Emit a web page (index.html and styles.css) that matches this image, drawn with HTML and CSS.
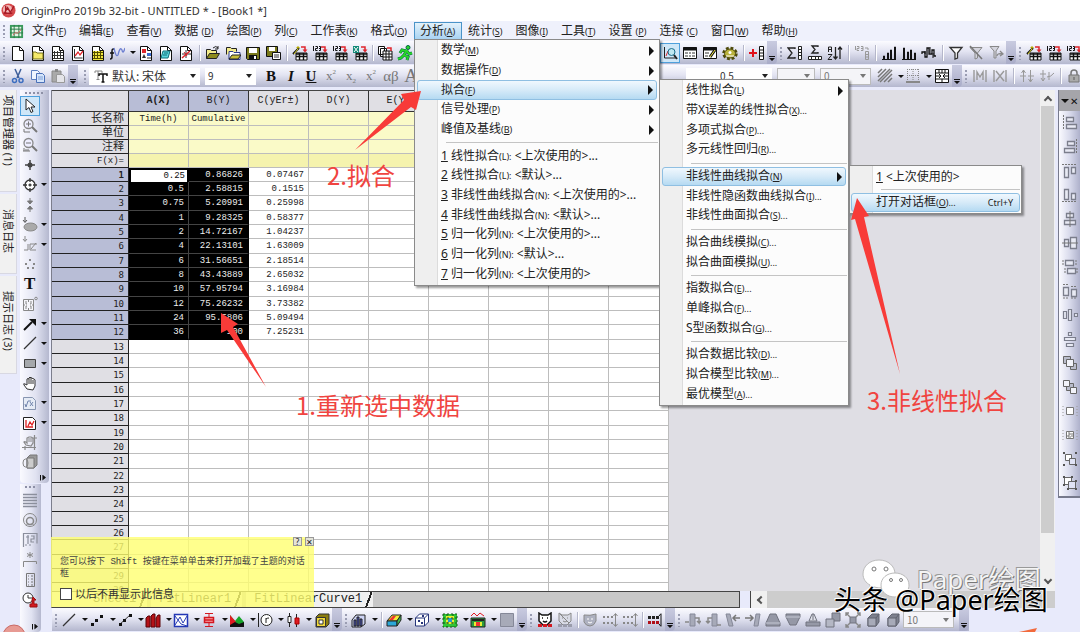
FILE: index.html
```html
<!DOCTYPE html>
<html lang="zh-CN">
<head>
<meta charset="utf-8">
<title>OriginPro 2019b 32-bit - UNTITLED * - [Book1 *]</title>
<link rel="stylesheet" href="styles.css">
</head>
<body>
<svg class="sprite" aria-hidden="true">
  <symbol id="page" viewBox="0 0 16 16"><path d="M2.500 1.500h7l4 4v10h-11z" fill="#fff" stroke="#111"/><path d="M9.500 1.500v4h4" fill="none" stroke="#111"/></symbol>
  <symbol id="pfolder" viewBox="0 0 16 16"><use href="#page"/><path d="M3 7h3l1 1h6v6H3z" fill="#f4e96a" stroke="#75701c"/></symbol>
  <symbol id="pgrid" viewBox="0 0 16 16"><use href="#page"/><path d="M4.500 6v8M7.500 6v8M10.500 6v8M3 7.500h10M3 10.500h10M3 13.500h10" stroke="#333"/></symbol>
  <symbol id="pgraph" viewBox="0 0 16 16"><use href="#page"/><path d="M4.500 4v9h8" fill="none" stroke="#333"/><path d="M5 11l3-4 2 3 3-4" fill="none" stroke="#e0262c" stroke-width="1.300"/></symbol>
  <symbol id="pmatrix" viewBox="0 0 16 16"><use href="#page"/><path d="M3 6h10v9H3z" fill="#f0e640"/><path d="M4.500 6v8M7.500 6v8M10.500 6v8M3 7.500h10M3 10.500h10M3 13.500h10" stroke="#554f00"/></symbol>
  <symbol id="func" viewBox="0 0 16 16"><path d="M5 4H4q-1 0-1 2v6q0 2-2 2M1 8h4" fill="none" stroke="#111" stroke-width="1.500"/><path d="M5 3q2 10 4 7q2-9 4-5q1 5 3-2" fill="none" stroke="#6d7fd0" stroke-width="1.300"/></symbol>
  <symbol id="playout" viewBox="0 0 16 16"><use href="#page"/><path d="M4 4h4v4H4z" fill="#e0262c"/><path d="M9 8h4v3H9z" fill="#3b6bd0"/><path d="M4 13l2-4 2 4z" fill="#333"/><path d="M9 13h4" stroke="#333"/></symbol>
  <symbol id="pnote" viewBox="0 0 16 16"><use href="#page"/><path d="M5 6h7l-2 7H3z" fill="#58d4dc" stroke="#137078"/><path d="M6 8h4M5 10h4" stroke="#137078"/></symbol>
  <symbol id="pexcel" viewBox="0 0 16 16"><use href="#page"/><path d="M8 5v8M4 9h9" stroke="#333"/><path d="M4 13l8-7" stroke="#e0262c" stroke-width="1.500"/><path d="M6 7l3 4" stroke="#e0262c"/></symbol>
  <symbol id="open" viewBox="0 0 16 16"><path d="M1.500 13.500v-9h4l1 1h5v3" fill="#f4ec8a" stroke="#222"/><path d="M1.500 13.500l3-5h10l-3 5z" fill="#8d8a1c" stroke="#222"/><path d="M8 3q3-3 5 0M13 1v3h-3" fill="none" stroke="#222"/></symbol>
  <symbol id="open2" viewBox="0 0 16 16"><path d="M1.500 9.500v-7h4l1 1h5v3" fill="#f4ec8a" stroke="#222"/><path d="M4 14.500v-8h4l1 1h6v7z" fill="#fff" stroke="#2b3a8c"/><path d="M4 14l3-4h9l-3 4z" fill="#c7bd3a" stroke="#222"/></symbol>
  <symbol id="save" viewBox="0 0 16 16"><path d="M1.500 2.500h13v12h-12l-1-1z" fill="#7b7a1b" stroke="#111"/><path d="M4 3h8v5H4z" fill="#fff"/><path d="M4 10h8v4H4z" fill="#111"/><path d="M9 11h2v3H9z" fill="#fff"/></symbol>
  <symbol id="save2" viewBox="0 0 16 16"><path d="M1.500 1.500h11v10h-11z" fill="#7b7a1b" stroke="#111"/><path d="M4 2h6v4H4z" fill="#fff"/><path d="M7.500 7.500h8v7h-8z" fill="#fff" stroke="#111"/><path d="M9 10h5M9 12h5" stroke="#333"/></symbol>
  <symbol id="sheet" viewBox="0 0 16 16"><path d="M4 8h11v7H4z" fill="#fff" stroke="#111"/><path d="M4 9h11M4 11.500h11M7.500 8v7M11.500 8v7" stroke="#111" stroke-width="1.400"/></symbol>
  <symbol id="redarrow" viewBox="0 0 16 16"><path d="M9 2h4v4" fill="none" stroke="#e0262c" stroke-width="1.500"/><path d="M10.500 4.500h5l-2.500 3z" fill="#e0262c"/></symbol>
  <symbol id="wizard" viewBox="0 0 16 16"><use href="#sheet"/><use href="#redarrow"/><path d="M1 9l6-6" stroke="#111" stroke-width="2"/><path d="M2 9l4-5" stroke="#e7dd30"/><path d="M6 1v3M4.500 2.500h3" stroke="#b5a900"/></symbol>
  <symbol id="ascii" viewBox="0 0 16 16"><use href="#sheet"/><use href="#redarrow"/><path d="M1.500 1v5M3.500 1.500h2v2h-2v2h2M7 1.500h1.500v4H7M7 3.500h1.500" fill="none" stroke="#111"/></symbol>
  <symbol id="xls" viewBox="0 0 16 16"><use href="#sheet"/><path d="M1 1h6v7H1z" fill="#138a78"/><path d="M2 2l4 5M6 2L2 7" stroke="#fff"/><use href="#redarrow"/></symbol>
  <symbol id="batch" viewBox="0 0 16 16"><path d="M1.500 1.500h6v8h-6zM3.500 3.500h6v8h-6z" fill="#fff" stroke="#111"/><path d="M6 6h9v9H6z" fill="#fff" stroke="#111"/><path d="M6 9h9M6 12h9M9 6v9M12 6v9" stroke="#111"/><path d="M10 3h4v3" fill="none" stroke="#e0262c" stroke-width="1.500"/></symbol>
  <symbol id="run" viewBox="0 0 16 16"><circle cx="11" cy="2.500" r="2" fill="#28d628" stroke="#064"/><path d="M10 5l-3 5 4 2-1 3M7 10l-3 3-3 1M9 6L5 5 3 8M10 6l2 3 3-1" fill="none" stroke="#064" stroke-width="3"/><path d="M10 5l-3 5 4 2-1 3M7 10l-3 3-3 1M9 6L5 5 3 8M10 6l2 3 3-1" fill="none" stroke="#28d628" stroke-width="2"/></symbol>
  <symbol id="zoomgraph" viewBox="0 0 16 16"><path d="M2.500 2v11h11M2 4h1M2 7h1M2 10h1" fill="none" stroke="#222"/><path d="M4 11l2-5 2 2" fill="none" stroke="#e0262c"/><circle cx="9.500" cy="7" r="3.500" fill="#bfe8f2" stroke="#1a6c8a"/><path d="M12 10l3 4" stroke="#222" stroke-width="2"/></symbol>
  <symbol id="results" viewBox="0 0 16 16"><path d="M1.500 2.500h13v11h-13z" fill="#fff" stroke="#111"/><path d="M1 4h14" stroke="#111" stroke-width="3"/><path d="M3 8h3M7 8h2M10 8h3M3 11h3M7 11h2M10 11h3" stroke="#333"/></symbol>
  <symbol id="script" viewBox="0 0 16 16"><path d="M1.500 2.500h13v11h-13z" fill="#fff" stroke="#111"/><path d="M1 4h14" stroke="#111" stroke-width="3"/><path d="M3 8h4M3 11h3" stroke="#333"/><path d="M8 12l5-7" stroke="#111" stroke-width="3"/><path d="M8 12l5-7" stroke="#f0e640"/></symbol>
  <symbol id="gear" viewBox="0 0 16 16"><ellipse cx="8" cy="8.500" rx="6" ry="5" fill="none" stroke="#4d4a0a" stroke-width="3.500" stroke-dasharray="2.600 1.700"/><ellipse cx="8" cy="8.500" rx="5.500" ry="4.500" fill="#b9b23c" stroke="#4d4a0a"/><circle cx="8" cy="7.500" r="1.500" fill="#fff"/><path d="M4 11h8" stroke="#fff"/></symbol>
  <symbol id="addcol" viewBox="0 0 16 16"><path d="M0 8h8M4 4v8" stroke="#e0101c" stroke-width="2"/><path d="M10.500 1.500h4v13h-4zM10 5h5M10 8h5M10 11h5" fill="#fff" stroke="#111"/></symbol>
  <symbol id="sumcol" viewBox="0 0 16 16"><path d="M8 4V3H1l4 5-4 5h7v-1" fill="none" stroke="#222" stroke-width="1.300"/><path d="M11.500 1.500h3v13h-3zM11 4.500h4M11 7.500h4M11 10.500h4" fill="#fff" stroke="#222"/></symbol>
  <symbol id="sumrow" viewBox="0 0 16 16"><path d="M11 2V1H5l3 3.500L5 8h6V7" fill="none" stroke="#222" stroke-width="1.300"/><path d="M1.500 11.500h13v3h-13zM4.500 11v4M8.500 11v4M11.500 11v4" fill="#fff" stroke="#222"/></symbol>
  <symbol id="sort" viewBox="0 0 16 16"><path d="M1.500 7V2h3v5M1 4.500h3M1 9.500h4l-4 5h4" fill="none" stroke="#222"/><path d="M8.500 2v12M6.500 11.500l2 2.500 2-2.500M13 14V2M11 4.500L13 2l2 2.500" fill="none" stroke="#222" stroke-width="1.300"/></symbol>
  <symbol id="setcol" viewBox="0 0 16 16"><path d="M1.500 1v4M3 1.500h2v2H3v2h2M7 1.500h2v4H7M7 3.500h2M11 3h3v2" fill="none" stroke="#999"/><path d="M11.500 6.500h3v8h-3zM11 9.500h4M11 12h4" fill="none" stroke="#999"/></symbol>
  <symbol id="hist" viewBox="0 0 16 16"><path d="M1 14.500h14M2.500 14v-3h1v3M6.500 14V8h1v6M9.500 14V5h1v9M13.500 14V2h1v12" fill="none" stroke="#111"/></symbol>
  <symbol id="hist2" viewBox="0 0 16 16"><path d="M1 14.500h14M2.500 14V3h1v11M6.500 14V7h1v7M9.500 14V5h1v9M13.500 14V8h1v6" fill="none" stroke="#111"/></symbol>
  <symbol id="hist3" viewBox="0 0 16 16"><path d="M1 9V7h3v5h2V3h2v6h3V5h2v6h2" fill="none" stroke="#111" stroke-width="1.300"/><path d="M4 6v3M9 2v6M12 8v5" stroke="#111"/></symbol>
  <symbol id="filter" viewBox="0 0 16 16"><path d="M2 2.500h12L9.500 8v5L7 14V8z" fill="#fff" stroke="#333" stroke-width="1.300"/></symbol>
  <symbol id="filterx" viewBox="0 0 16 16"><path d="M2 2.500h12L9.500 8v5L7 14V8z" fill="#d5d5de" stroke="#888"/><path d="M2 1l12 13" stroke="#777" stroke-width="1.500"/></symbol>
  <symbol id="filterr" viewBox="0 0 16 16"><path d="M2 1.500h9L8 6v7H6V6z" fill="#d5d5de" stroke="#888"/><path d="M9 11q0-3 5-2M12 6l3 3-3 2" fill="none" stroke="#888" stroke-width="1.300"/></symbol>
  <symbol id="cut" viewBox="0 0 16 16"><path d="M5 1l4 9M11 1L7 10" stroke="#3d5e9a" stroke-width="1.500"/><circle cx="4.500" cy="12.500" r="2" fill="none" stroke="#3d6ec0" stroke-width="1.500"/><circle cx="11" cy="12.500" r="2" fill="none" stroke="#3d6ec0" stroke-width="1.500"/></symbol>
  <symbol id="copy" viewBox="0 0 16 16"><path d="M1.500 2.500h6l2 2v7h-8z" fill="#eef5ff" stroke="#5b7fc0"/><path d="M6.500 5.500h6l2 2v7h-8z" fill="#d5e5fb" stroke="#4a70b8"/><path d="M8 9h5M8 11h5" stroke="#7fa0d8"/></symbol>
  <symbol id="paste" viewBox="0 0 16 16"><path d="M2 3h9v11H2z" fill="#aaa" stroke="#888"/><path d="M5 1h3v3H5z" fill="#888"/><path d="M6.500 6.500h6l2 2v6h-8z" fill="#e4e4e8" stroke="#999"/></symbol>
  <symbol id="tt" viewBox="0 0 16 16"><path d="M2 5V3h7v2M5 3v8M3.500 11.500h3" fill="none" stroke="#888"/><path d="M6 8V6h8v2M10 6v8M8.500 14h3" fill="none" stroke="#111" stroke-width="1.500"/></symbol>
  <symbol id="hatch" viewBox="0 0 16 16"><path d="M1 5l4-4M1 9l8-8M1 13L13 1M3 14L15 2M7 14l8-8M11 14l4-4" stroke="#777" stroke-width="1.500"/></symbol>
  <symbol id="border" viewBox="0 0 16 16"><path d="M2 1.500h12M2 7.500h12M2.500 1v12M8 1v12M13.500 1v12" stroke="#888" stroke-dasharray="1 1"/><path d="M1 14h14" stroke="#888" stroke-width="2"/></symbol>
  <symbol id="merge" viewBox="0 0 16 16"><path d="M1.500 1.500h13v13h-13zM1 5h14M1 11h14M8 1v4M8 11v4M5 1v4M11 1v4" fill="#fff" stroke="#111"/><path d="M2 8h4M14 8h-4M5 6l2 2-2 2M11 6L9 8l2 2" fill="none" stroke="#111"/></symbol>
  <symbol id="maskm" viewBox="0 0 16 16"><path d="M2 2v12M14 2v12M5 12V4l3 5 3-5v8" fill="none" stroke="#999" stroke-width="1.400"/></symbol>
  <symbol id="maskx" viewBox="0 0 16 16"><path d="M2 2v12M14 2v12M4 3l8 10M12 3L4 13" fill="none" stroke="#999" stroke-width="1.400"/></symbol>
  <symbol id="hash" viewBox="0 0 16 16"><path d="M1 8h6M9 8h6M4.500 2v12M11.500 2v12M2.500 5l2-3 2 3M9.500 11l2 3 2-3" fill="none" stroke="#999"/></symbol>
  <symbol id="hash2" viewBox="0 0 16 16"><path d="M1 6h6M4 2v11M2 10l2 3 2-3M8 9q4 0 7-4M10 4v8" fill="none" stroke="#999"/></symbol>
  <symbol id="lock" viewBox="0 0 16 16"><path d="M3 7h10v7H3z" fill="#aaa" stroke="#777"/><path d="M5 7V5q0-3 3-3t3 3v2M8 9v3" fill="none" stroke="#777" stroke-width="1.500"/></symbol>

  <symbol id="pointer" viewBox="0 0 16 16"><path d="M4 1v11l3-2.500 2 5 2-1-2-4.500h4z" fill="#fff" stroke="#222"/></symbol>
  <symbol id="zin" viewBox="0 0 16 16"><circle cx="6.500" cy="6" r="4.500" fill="#eef" stroke="#888" stroke-width="1.300"/><path d="M4 6h5M6.500 3.500v5M2 11v3h6" fill="none" stroke="#777"/><path d="M10 9l5 5" stroke="#777" stroke-width="2"/></symbol>
  <symbol id="zout" viewBox="0 0 16 16"><circle cx="6.500" cy="6" r="4.500" fill="#eef" stroke="#888" stroke-width="1.300"/><path d="M4 6h5M1 14h7M2 11v3M4 12v2M6 12v2" fill="none" stroke="#777"/><path d="M10 9l5 5" stroke="#777" stroke-width="2"/></symbol>
  <symbol id="reader" viewBox="0 0 16 16"><path d="M8 3v10M3 8h10" stroke="#444" stroke-width="1.500"/><circle cx="8" cy="8" r="2.500" fill="#444"/></symbol>
  <symbol id="target" viewBox="0 0 16 16"><circle cx="8" cy="8" r="5" fill="#fff" stroke="#333" stroke-width="1.300"/><path d="M8 1v4M8 11v4M1 8h4M11 8h4M6.500 8h3M8 6.500v3" stroke="#333" stroke-width="1.300"/></symbol>
  <symbol id="dsel" viewBox="0 0 16 16"><path d="M8 1v5M5.500 4L8 7l2.500-3zM8 15v-5M5.500 12L8 9l2.500 3z" fill="#777" stroke="#777"/></symbol>
  <symbol id="msk" viewBox="0 0 16 16"><path d="M3 0v5M1 3l2 2.500L5 3" fill="none" stroke="#555"/><ellipse cx="8.500" cy="10" rx="6.500" ry="4" fill="#aaa" stroke="#888"/></symbol>
  <symbol id="mskp" viewBox="0 0 16 16"><path d="M3 0v5M1 3l2 2.500L5 3M2 14h4V8M8 8h7M8 8v6h6M9 13l5-6" fill="none" stroke="#888"/></symbol>
  <symbol id="dots" viewBox="0 0 16 16"><path d="M7 3h2v2H7zM3 7h2v2H3zM11 7h2v2h-2zM5 11h2v2H5zM10 11h2v2h-2z" fill="#888"/></symbol>
  <symbol id="cam" viewBox="0 0 16 16"><path d="M1.500 3.500h10v11h-10z" fill="#f5f5fa" stroke="#888"/><path d="M4 5v3h1M9 5v3H8M4 13v-3h1M9 13v-3H8M6.500 4v2M6.500 12v2M2 9h1M10 9h1" fill="none" stroke="#888"/><circle cx="14" cy="2.500" r="1.300" fill="none" stroke="#888"/></symbol>
  <symbol id="arr" viewBox="0 0 16 16"><path d="M2 14l8-8" stroke="#111" stroke-width="2"/><path d="M7 3h7v7z" fill="#111"/></symbol>
  <symbol id="line" viewBox="0 0 16 16"><path d="M2 14L14 2" stroke="#333" stroke-width="1.300"/></symbol>
  <symbol id="rect" viewBox="0 0 16 16"><path d="M2.500 4.500h11v8h-11z" fill="#a5a8ab" stroke="#444"/></symbol>
  <symbol id="hand" viewBox="0 0 16 16"><path d="M5 14L2 10q-1-2 1-1l2 1V4q1-1 2 0V3q1-2 2 0 1-1 2 1 1-1 2 1v6l-2 4z" fill="#fff" stroke="#333"/><path d="M7 4v5M9 3v6M11 5v4" stroke="#333"/></symbol>
  <symbol id="fx" viewBox="0 0 16 16"><path d="M1.500 2.500h9l3 3v9h-12z" fill="#e5ebf5" stroke="#8795b0"/><path d="M3 9l1 3 2-6h3M8 11l3-4M8 7l3 4" fill="none" stroke="#7386ad"/></symbol>
  <symbol id="gr" viewBox="0 0 16 16"><path d="M1.500 2.500h9l3 3v9h-12z" fill="#fff" stroke="#222"/><path d="M4 5v7h7M6 11l2-4 2 3 2-4" fill="none" stroke="#d22" stroke-width="1.300"/></symbol>
  <symbol id="hgrid" viewBox="0 0 16 16"><path d="M4 11L2 8q1-1 3 1V4l2-1 2 0 2 1 0 5-2 3zM0 13.500h14M12.500 1v15M10 4h5M3 12v4" fill="none" stroke="#888" stroke-width="1.200"/><path d="M7 4v4M9 4v4" stroke="#888"/></symbol>
  <symbol id="cube" viewBox="0 0 16 16"><path d="M5 4l3-3h7v10l-3 3H5z" fill="#999" stroke="#777"/><path d="M5 4h7v10H5z" fill="#ccc" stroke="#777"/><ellipse cx="3.500" cy="9" rx="2.500" ry="4" fill="none" stroke="#888"/></symbol>
  <symbol id="lines" viewBox="0 0 16 16"><path d="M1 2.500h14M1 5.500h14M1 8.500h14M1 11.500h14M1 14.500h14" stroke="#8b8f9c" stroke-width="1.500"/></symbol>
  <symbol id="spiral" viewBox="0 0 16 16"><circle cx="8" cy="8" r="6.500" fill="none" stroke="#888"/><circle cx="8" cy="9" r="3.500" fill="none" stroke="#888" stroke-width="1.500"/><path d="M4 14l2-3M12 14l-2-3" stroke="#888"/></symbol>
  <symbol id="legend" viewBox="0 0 16 16"><path d="M1.500 1v14M1 1.500h14v10M4 5h3M6 3v9M9 4h3v3H9v3h3M3 13h2M7 13h2" fill="none" stroke="#8b8f9c" stroke-width="1.200"/></symbol>
  <symbol id="star" viewBox="0 0 16 16"><path d="M8 0v6M5 1.500l6 3M11 1.500l-6 3M1.500 15V9.500h13V12" fill="none" stroke="#888"/></symbol>
  <symbol id="tbl" viewBox="0 0 16 16"><path d="M4.500 1.500h8v13h-8zM6 4h1M9 4h2M6 7h1M9 7h2M6 10h1M9 10h2M6 13h1M9 13h2" fill="none" stroke="#777"/></symbol>
  <symbol id="clock" viewBox="0 0 16 16"><circle cx="6" cy="6" r="5" fill="#fff" stroke="#333"/><path d="M6 3v3h4" fill="none" stroke="#333"/><path d="M11 5l3 3h-2v4h3v3H8v-3h2V8z" fill="#d31820" stroke="#911"/></symbol>

  <symbol id="scatter" viewBox="0 0 16 16"><path d="M2 11h3v3H2zM6 7h3v3H6zM11 3h3v3h-3z" fill="#111"/></symbol>
  <symbol id="linesym" viewBox="0 0 16 16"><path d="M2 13L13 3" stroke="#333"/><path d="M2 11h3v3H2zM6 7h3v3H6zM12 2h3v3h-3z" fill="#111"/></symbol>
  <symbol id="bars" viewBox="0 0 16 16"><path d="M1 6l2-2h2v11H1zM6 4l2-2h2v13H6zM11 6l2-3h2v12h-4z" fill="#b51218" stroke="#5a0508"/></symbol>
  <symbol id="multi" viewBox="0 0 16 16"><path d="M1.500 2.500h13v12h-13z" fill="#fff" stroke="#2337b5" stroke-width="1.500"/><path d="M2 13l5-8 3 6 4-7M2 4l6 8 6 2" fill="none" stroke="#2b3fb5"/></symbol>
  <symbol id="box" viewBox="0 0 16 16"><path d="M8 1v14M4 1.500h8M4 14.500h8" stroke="#d31820"/><path d="M3.500 5.500h9v5h-9zM3 8h10" fill="#fba7a9" stroke="#d31820" stroke-width="1.500"/></symbol>
  <symbol id="area" viewBox="0 0 16 16"><path d="M1 3l5 6 4-5 5 6v5H1z" fill="#18a52a"/><path d="M1 3l6 7v5H1z" fill="#e01a22"/><path d="M1 13l5-3 4 2 5-2v5H1z" fill="#111"/></symbol>
  <symbol id="polar" viewBox="0 0 16 16"><path d="M1.500 1v14" stroke="#222"/><circle cx="9.500" cy="8" r="5.500" fill="#fff" stroke="#222"/><path d="M9 11V6M9 7q1-1 3-1" fill="none" stroke="#222"/></symbol>
  <symbol id="candle" viewBox="0 0 16 16"><path d="M4.500 1v14M11.500 2v13" stroke="#222"/><path d="M3 4.500h3v6H3z" fill="#fff" stroke="#222"/><path d="M10 6h4v6h-4z" fill="#e01a22" stroke="#a00"/></symbol>
  <symbol id="tmpl" viewBox="0 0 16 16"><path d="M2 5l3-3h10v10l-3 3H2z" fill="#8b7c10" stroke="#333"/><path d="M2.500 5.500h9v9h-9z" fill="#f1d83b" stroke="#333"/><path d="M5 8h4v4H5z" fill="#fff" stroke="#333"/></symbol>
  <symbol id="bars3d" viewBox="0 0 16 16"><path d="M1 8l4-5h9v9l-4 3H1z" fill="#cdd3f4" stroke="#222"/><path d="M3 8h2v6H3zM6 5h2v9H6zM9 7h2v7H9z" fill="#4b55b8" stroke="#222"/></symbol>
  <symbol id="surf" viewBox="0 0 16 16"><path d="M1 9l5-6h9l-4 6z" fill="#f3ea36" stroke="#222"/><path d="M3 8l4-4h3L7 8z" fill="#e33"/><path d="M1 9h10v5H1z" fill="#2ca8d8" stroke="#222"/><path d="M11 9l4-6v5l-4 6z" fill="#40b850" stroke="#222"/></symbol>
  <symbol id="sc3d" viewBox="0 0 16 16"><path d="M1.500 6l4-4h9v8l-4 4h-9zM1.500 6h9v8M10.500 6l4-4" fill="#fff" stroke="#27357a"/><path d="M4 8h2v2H4zM7 10h2v2H7zM8 3h2v2H8z" fill="#27357a"/></symbol>
  <symbol id="contour" viewBox="0 0 16 16"><path d="M1 2h14v13H1z" fill="#2fc836"/><path d="M4 4h8v8H4z" fill="#e9ef31"/><path d="M6 6h4v4H6z" fill="#239ad8"/><path d="M1 2h14v13H1zM5 2v13M11 2v13M1 6h14M1 11h14" fill="none" stroke="#165b1a" stroke-dasharray="2 2"/></symbol>
  <symbol id="contour2" viewBox="0 0 16 16"><path d="M1 4l3-3 3 3 3-3 4 3" fill="none" stroke="#e01a22"/><path d="M1 6h14v9H1z" fill="#2d9c3f" stroke="#222"/><path d="M2 7h12v2H2z" fill="#222"/><path d="M4 10h8v4H4z" fill="#e9ef31"/><path d="M6 10h4v4H6z" fill="#e33"/></symbol>
  <symbol id="gray" viewBox="0 0 16 16"><path d="M1.500 1.500h13v13h-13z" fill="#a7aab8" stroke="#858898"/></symbol>
  <symbol id="mask" viewBox="0 0 16 16"><path d="M2 1l3 2h6l3-2v8l-4 4H6L2 9z" fill="#fff" stroke="#111" stroke-width="1.500"/><path d="M5 6h1M10 6h1M6 9q2 2 4 0" fill="none" stroke="#111" stroke-width="1.500"/><path d="M1 12h4v3H1zM6 12h4v3H6zM11 12h4v3h-4z" fill="#d31820"/></symbol>
  <symbol id="maskg" viewBox="0 0 16 16"><path d="M2 1l3 2h6l3-2v8l-4 4H6L2 9z" fill="#d9dbe6" stroke="#888"/><path d="M5 6h1M10 6h1M6 9q2 2 4 0M3 2l9 9" fill="none" stroke="#888"/><path d="M1 12h4v3H1zM6 12h4v3H6zM11 12h4v3h-4z" fill="#9a9cab"/></symbol>
  <symbol id="shield" viewBox="0 0 16 16"><path d="M2 3q6 1 12-1v7q-2 5-6 5t-6-4z" fill="#aeb1c0" stroke="#888"/><path d="M5 7h2M9 7h2M6 10q2 2 4 0" fill="none" stroke="#fff"/></symbol>
  <symbol id="ptsg" viewBox="0 0 16 16"><path d="M1 4h2v2H1zM5 4h2v2H5zM9 4h2v2H9zM1 10h2v2H1zM5 10h2v2H5zM9 10h2v2H9z" fill="#888"/><path d="M13.500 2v12M11.500 4l2-2.500 2 2.500M11.500 12l2 2.500 2-2.500" fill="none" stroke="#888"/></symbol>
  <symbol id="pts" viewBox="0 0 16 16"><path d="M1 9h3v3H1zM5 9h3v3H5zM9 9h3v3H9z" fill="#b01018"/><path d="M1 4h3v3H1zM5 4h3v3H5zM9 4h3v3H9z" fill="#222"/><path d="M14 2v12M12 4l2-2.500M12 12l2 2.500" stroke="#111"/></symbol>
  <symbol id="rot1" viewBox="0 0 16 16"><path d="M5 2h5v12H5z" fill="#a7aab8" stroke="#858898"/><path d="M0 10h4M10 6h4v5l-2-2M14 11l2-2" fill="none" stroke="#888" stroke-width="1.500"/></symbol>
  <symbol id="rot2" viewBox="0 0 16 16"><path d="M7 2h5v12H7z" fill="#a7aab8" stroke="#858898"/><path d="M16 13h-4M7 6H3v5M1 9l2 2 2-2" fill="none" stroke="#888" stroke-width="1.500"/></symbol>
  <symbol id="tilt1" viewBox="0 0 16 16"><path d="M1 2h4l3 12H4z" fill="#a7aab8" stroke="#858898"/><path d="M15 6H8M11 3L8 6l3 3" fill="none" stroke="#777" stroke-width="1.500"/></symbol>
  <symbol id="tilt2" viewBox="0 0 16 16"><path d="M11 2h4l-2 12H9z" fill="#a7aab8" stroke="#858898"/><path d="M0 6h8M5 3l3 3-3 3" fill="none" stroke="#777" stroke-width="1.500"/></symbol>
  <symbol id="trapu" viewBox="0 0 16 16"><path d="M5 2h6l4 9v3H1v-3z" fill="#9598a6" stroke="#70737f"/><path d="M1 11h14" stroke="#c5c8d4"/></symbol>
  <symbol id="trapd" viewBox="0 0 16 16"><path d="M1 2h14v3l-4 8H5L1 5z" fill="#9598a6" stroke="#70737f"/><path d="M1 5h14" stroke="#c5c8d4"/></symbol>
  <symbol id="persp" viewBox="0 0 16 16"><path d="M1 10h14v4H1z" fill="#9598a6" stroke="#70737f"/><path d="M4 9l3-7h2l3 7zM8 2v6" fill="#dfe1ea" stroke="#70737f"/></symbol>
  <symbol id="fit" viewBox="0 0 16 16"><path d="M5 5h6v6H5z" fill="#9598a6" stroke="#70737f"/><path d="M1 1l4 4M15 1l-4 4M1 15l4-4M15 15l-4-4M1 4V1h3M12 1h3v3M1 12v3h3M12 15h3v-3" fill="none" stroke="#888" stroke-width="1.400"/></symbol>
  <symbol id="stack" viewBox="0 0 16 16"><path d="M7 1h8v8H7z" fill="#9598a6" stroke="#70737f"/><path d="M1 7h8v8H1z" fill="#b4b7c4" stroke="#70737f"/></symbol>
  <symbol id="cubeg" viewBox="0 0 16 16"><path d="M3 6l4-4h7v8l-3 4H3z" fill="#7d808e" stroke="#60636e"/><path d="M3 6h8v8H3z" fill="#a7aab8" stroke="#60636e"/><path d="M11 6l3-4" stroke="#60636e"/></symbol>

  <symbol id="al1" viewBox="0 0 16 16"><path d="M1.500 0v15" stroke="#777" stroke-dasharray="2 1"/><path d="M4.500 2.500h7v4h-7zM4.500 9.500h10v4h-10z" fill="#e8eaf4" stroke="#7b7e8c" stroke-width="1.300"/></symbol>
  <symbol id="al2" viewBox="0 0 16 16"><path d="M14.500 0v15" stroke="#777" stroke-dasharray="2 1"/><path d="M5.500 2.500h7v4h-7zM2.500 9.500h10v4h-10z" fill="#e8eaf4" stroke="#7b7e8c" stroke-width="1.300"/></symbol>
  <symbol id="al3" viewBox="0 0 16 16"><path d="M0 1.500h15" stroke="#777" stroke-dasharray="2 1"/><path d="M2.500 4.500h4v10h-4zM9.500 4.500h4v6h-4z" fill="#e8eaf4" stroke="#7b7e8c" stroke-width="1.300"/></symbol>
  <symbol id="al4" viewBox="0 0 16 16"><path d="M0 14.500h15" stroke="#777" stroke-dasharray="2 1"/><path d="M2.500 2.500h4v10h-4zM9.500 6.500h4v6h-4z" fill="#e8eaf4" stroke="#7b7e8c" stroke-width="1.300"/></symbol>
  <symbol id="al5" viewBox="0 0 16 16"><path d="M4.500 2.500h7v4h-7zM2.500 9.500h11v4h-11z" fill="#e8eaf4" stroke="#7b7e8c" stroke-width="1.300"/><path d="M8 0v16" stroke="#777"/></symbol>
  <symbol id="al6" viewBox="0 0 16 16"><path d="M2.500 4.500h4v7h-4zM8.500 2.500h6v11h-6z" fill="#e8eaf4" stroke="#7b7e8c" stroke-width="1.300"/><path d="M0 8h16" stroke="#777"/></symbol>
  <symbol id="al7" viewBox="0 0 16 16"><path d="M1 1v6M14 1v6M3 9v6M15 9v6" stroke="#777" stroke-dasharray="2 1"/><path d="M3.500 1.500h8v5h-8zM5.500 9.500h8v5h-8z" fill="#e8eaf4" stroke="#7b7e8c" stroke-width="1.300"/></symbol>
  <symbol id="al8" viewBox="0 0 16 16"><path d="M1 1.500h6M9 3.500h6M1 15h6M9 15h6" stroke="#777" stroke-dasharray="2 1"/><path d="M1.500 4.500h5v8h-5zM9.500 6.500h5v7h-5z" fill="#e8eaf4" stroke="#7b7e8c" stroke-width="1.300"/></symbol>
  <symbol id="al9" viewBox="0 0 16 16"><path d="M1.500 4.500h3v7h-3zM6.500 2.500h3v11h-3zM12.500 6.500h3v3h-3z" fill="#e8eaf4" stroke="#7b7e8c" stroke-width="1.200"/></symbol>
  <symbol id="al10" viewBox="0 0 16 16"><path d="M6.500 1.500h3v3h-3zM2.500 6.500h11v3h-11zM4.500 12.500h7v3h-7z" fill="#e8eaf4" stroke="#7b7e8c" stroke-width="1.200"/></symbol>
  <symbol id="front" viewBox="0 0 16 16"><path d="M1.500 1.500h7v7h-7zM8.500 8.500h6v6h-6z" fill="#b9bccb" stroke="#666"/><path d="M4.500 4.500h7v7h-7z" fill="#f2f3fa" stroke="#666"/></symbol>
  <symbol id="back" viewBox="0 0 16 16"><path d="M4.500 4.500h7v7h-7z" fill="#b9bccb" stroke="#666"/><path d="M1.500 1.500h6v6h-6zM8.500 8.500h6v6h-6z" fill="#f2f3fa" stroke="#666"/></symbol>
  <symbol id="one" viewBox="0 0 16 16"><path d="M1 3v10M15 3v10" stroke="#999" stroke-dasharray="1 2"/><path d="M4.500 4.500h7v7h-7z" fill="#fff" stroke="#777"/></symbol>
  <symbol id="oneq" viewBox="0 0 16 16"><path d="M1 3v10M15 3v10" stroke="#999" stroke-dasharray="1 2"/><path d="M4.500 4.500h7v7h-7z" fill="#fff" stroke="#777"/><path d="M6 6h2v2H6v2h3M10 6v4" stroke="#777" fill="none"/></symbol>
  <symbol id="group" viewBox="0 0 16 16"><path d="M3.500 3.500h6v6h-6z" fill="#fff" stroke="#666"/><path d="M7.500 7.500h6v6h-6z" fill="#e0e3f5" stroke="#666"/><path d="M1 1h2v2H1zM13 1h2v2h-2zM1 13h2v2H1zM13 13h2v2h-2z" fill="#555"/></symbol>
  <symbol id="ungroup" viewBox="0 0 16 16"><path d="M2.500 2.500h7v7h-7z" fill="#fff" stroke="#666"/><path d="M6.500 6.500h7v7h-7z" fill="#e0e3f5" stroke="#666"/><path d="M1 1h2v2H1zM9 1h2v2H9zM1 9h2v2H1zM13 5h2v2h-2zM5 13h2v2H5zM13 13h2v2h-2z" fill="#555"/></symbol>
</svg>

<div class="app">
  <header class="title">
    <svg class="logo" viewBox="0 0 16 16"><circle cx="8" cy="8" r="7.500" fill="#d5484a"/><circle cx="7" cy="7" r="5" fill="#f2b6b5"/><path d="M3 12l4-7 3 5 4-7M5 3v8h7" fill="none" stroke="#a81c26" stroke-width="1.500"/></svg>
    <h1>OriginPro 2019b 32-bit - UNTITLED * - [Book1 *]</h1>
  </header>

  <nav class="menubar">
    <i class="grip"></i>
    <svg class="bookicon" viewBox="0 0 16 16"><path d="M1 1h14v14H1z" fill="#3b9a5d"/><path d="M3 3h10v10H3z" fill="#e4f4e6"/><path d="M1 5.500h14M1 9.500h14M5.500 1v14M10.500 1v14" stroke="#277a46"/><path d="M4 12l3-3 2 1 4-4" fill="none" stroke="#d66"/></svg>
    <button>文件<small>(<u>F</u>)</small></button><button>编辑<small>(<u>E</u>)</small></button><button>查看<small>(<u>V</u>)</small></button><button>数据 <small>(<u>D</u>)</small></button><button>绘图<small>(<u>P</u>)</small></button><button>列<small>(<u>C</u>)</small></button><button>工作表<small>(<u>K</u>)</small></button><button>格式<small>(<u>O</u>)</small></button><button class="open">分析<small>(<u>A</u>)</small></button><button>统计<small>(<u>S</u>)</small></button><button>图像<small>(<u>I</u>)</small></button><button>工具<small>(<u>T</u>)</small></button><button>设置 <small>(<u>P</u>)</small></button><button>连接 <small>(<u>C</u>)</small></button><button>窗口<small>(<u>W</u>)</small></button><button>帮助<small>(<u>H</u>)</small></button>
  </nav>

  <div class="tools">
    <div class="bar">
      <i class="grip"></i>
      <button aria-label="新建项目"><svg><use href="#page"/></svg></button>
      <button aria-label="新建文件夹"><svg><use href="#pfolder"/></svg></button>
      <button aria-label="新建工作簿"><svg><use href="#pgrid"/></svg></button>
      <button aria-label="新建图形"><svg><use href="#pgraph"/></svg></button>
      <button aria-label="新建矩阵"><svg><use href="#pmatrix"/></svg></button>
      <button class="dd" aria-label="新建函数图"><svg><use href="#func"/></svg></button>
      <button aria-label="新建布局"><svg><use href="#playout"/></svg></button>
      <button aria-label="新建备注"><svg><use href="#pnote"/></svg></button>
      <button aria-label="新建图像"><svg><use href="#pexcel"/></svg></button>
      <i class="sep"></i>
      <button aria-label="打开"><svg><use href="#open"/></svg></button>
      <button aria-label="打开模板"><svg><use href="#open2"/></svg></button>
      <button aria-label="保存"><svg><use href="#save"/></svg></button>
      <button aria-label="保存模板"><svg><use href="#save2"/></svg></button>
      <i class="sep"></i>
      <button aria-label="导入向导"><svg><use href="#wizard"/></svg></button>
      <button aria-label="导入单个 ASCII"><svg><use href="#ascii"/></svg></button>
      <button aria-label="导入多个 ASCII"><svg><use href="#ascii"/></svg></button>
      <button aria-label="导入 Excel"><svg><use href="#xls"/></svg></button>
      <i class="sep tight"></i>
      <button aria-label="批处理"><svg><use href="#batch"/></svg></button>
      <button aria-label="重新计算"><svg><use href="#run"/></svg></button>
    </div>
    <div class="bar fill"></div>
    <div class="bar">
      <button class="on" aria-label="代码生成器"><svg><use href="#zoomgraph"/></svg></button>
      <button aria-label="结果日志"><svg><use href="#results"/></svg></button>
      <button aria-label="命令窗口"><svg><use href="#script"/></svg></button>
      <button aria-label="选项"><svg><use href="#gear"/></svg></button>
      <i class="sep"></i>
      <button aria-label="添加新列"><svg><use href="#addcol"/></svg></button>
      <button class="more" aria-label="更多"></button>
    </div>
    <div class="bar">
      <i class="grip"></i>
      <button aria-label="列统计"><svg><use href="#sumcol"/></svg></button>
      <button aria-label="行统计"><svg><use href="#sumrow"/></svg></button>
      <button aria-label="排序"><svg><use href="#sort"/></svg></button>
      <i class="sep"></i>
      <button aria-label="设置列值"><svg><use href="#setcol"/></svg></button>
      <i class="sep"></i>
      <button aria-label="行号"><svg><use href="#hist"/></svg></button>
      <button aria-label="正态随机数"><svg><use href="#hist2"/></svg></button>
      <button aria-label="均匀随机数"><svg><use href="#hist3"/></svg></button>
      <i class="sep"></i>
      <button aria-label="筛选"><svg><use href="#filter"/></svg></button>
      <button aria-label="停用筛选"><svg><use href="#filterx"/></svg></button>
      <button aria-label="重新筛选"><svg><use href="#filterr"/></svg></button>
      <button class="more" aria-label="更多"></button>
    </div>
    <div class="bar last">
      <i class="grip"></i>
      <button aria-label="导入向导"><svg><use href="#wizard"/></svg></button>
      <button aria-label="导入 ASCII"><svg><use href="#ascii"/></svg></button>
      <button aria-label="导入多个"><svg><use href="#ascii"/></svg></button>
    </div>
  </div>

  <div class="tools">
    <div class="bar">
      <i class="grip"></i>
      <button aria-label="剪切"><svg><use href="#cut"/></svg></button>
      <button aria-label="复制"><svg><use href="#copy"/></svg></button>
      <button aria-label="粘贴"><svg><use href="#paste"/></svg></button>
      <button class="more" aria-label="更多"></button>
    </div>
    <div class="bar fill fonts">
      <i class="grip"></i>
      <div class="combo font"><svg><use href="#tt"/></svg><select aria-label="字体"><option>默认: 宋体</option></select></div>
      <div class="combo size"><select aria-label="字号"><option>9</option></select></div>
      <button class="ltr"><b>B</b></button>
      <button class="ltr"><b><em>I</em></b></button>
      <button class="ltr"><b><u>U</u></b></button>
      <button class="ltr dim">x<sup>2</sup></button>
      <button class="ltr dim">x<sub>2</sub></button>
      <button class="ltr dim">x<sup>2</sup></button>
      <button class="ltr dim mid">αβ</button>
      <button class="ltr dim big">A</button>
    </div>
    <div class="bar">
      <div class="combo width"><select aria-label="线宽"><option>0.5</option></select></div>
      <div class="combo style off"><select aria-label="线型" disabled><option></option></select></div>
      <div class="combo size off"><select aria-label="图案" disabled><option>0</option></select></div>
      <button class="dd" aria-label="填充图案"><svg><use href="#hatch"/></svg></button>
      <button class="dd" aria-label="边框"><svg><use href="#border"/></svg></button>
      <button aria-label="合并单元格"><svg><use href="#merge"/></svg></button>
      <button class="more" aria-label="更多"></button>
    </div>
    <div class="bar last">
      <i class="grip"></i>
      <button aria-label="屏蔽"><svg><use href="#maskm"/></svg></button>
      <button aria-label="取消屏蔽"><svg><use href="#maskx"/></svg></button>
      <i class="sep"></i>
      <button aria-label="交换"><svg><use href="#hash"/></svg></button>
      <button aria-label="移动"><svg><use href="#hash2"/></svg></button>
      <i class="sep"></i>
      <button aria-label="锁定"><svg><use href="#lock"/></svg></button>
    </div>
  </div>

  <main class="work">
    <aside class="dock"><button class="d1">项目管理器 (1)</button><button class="d2">消息日志</button><button class="d3">提示日志 (3)</button></aside>

    <aside class="side">
      <div class="toolbox wide">
        <i class="hgrip"></i>
        <button class="on" aria-label="指针"><svg><use href="#pointer"/></svg></button>
        <button aria-label="放大"><svg><use href="#zin"/></svg></button>
        <button aria-label="缩小"><svg><use href="#zout"/></svg></button>
        <button aria-label="屏幕读取"><svg><use href="#reader"/></svg></button>
        <button class="dd" aria-label="数据读取"><svg><use href="#target"/></svg></button>
        <button aria-label="数据选择"><svg><use href="#dsel"/></svg></button>
        <button class="dd" aria-label="屏蔽点"><svg><use href="#msk"/></svg></button>
        <button class="dd" aria-label="区域选择"><svg><use href="#mskp"/></svg></button>
        <button aria-label="绘制数据"><svg><use href="#dots"/></svg></button>
        <button class="ltr tee"><b>T</b></button>
        <button aria-label="插入"><svg><use href="#cam"/></svg></button>
        <button class="dd" aria-label="箭头"><svg><use href="#arr"/></svg></button>
        <button class="dd" aria-label="直线"><svg><use href="#line"/></svg></button>
        <button class="dd" aria-label="矩形"><svg><use href="#rect"/></svg></button>
        <button aria-label="平移"><svg><use href="#hand"/></svg></button>
        <button class="dd" aria-label="插入公式"><svg><use href="#fx"/></svg></button>
        <button class="dd" aria-label="插入图形"><svg><use href="#gr"/></svg></button>
        <button aria-label="平移坐标"><svg><use href="#hgrid"/></svg></button>
        <button aria-label="旋转"><svg><use href="#cube"/></svg></button>
        <button class="vmore" aria-label="更多"></button>
      </div>
      <div class="toolbox narrow">
        <i class="hgrip"></i>
        <button aria-label="颜色标尺"><svg><use href="#lines"/></svg></button>
        <button aria-label="气泡标尺"><svg><use href="#spiral"/></svg></button>
        <button aria-label="图例"><svg><use href="#legend"/></svg></button>
        <button aria-label="星号"><svg><use href="#star"/></svg></button>
        <button aria-label="表格"><svg><use href="#tbl"/></svg></button>
        <button aria-label="时间戳"><svg><use href="#clock"/></svg></button>
      </div>
    </aside>

    <section class="book">
      <div class="view">
        <div class="canvas">
          <table class="sheet">
            <thead><tr><th class="rh"></th><th class="sel b">A(X)</th><th class="sel">B(Y)</th><th>C(yEr±)</th><th>D(Y)</th><th>E(Y)</th><th></th><th></th><th></th><th></th></tr></thead>
            <tbody class="meta">
              <tr><th>长名称</th><td>Time(h)</td><td>Cumulative</td><td></td><td></td><td></td><td></td><td></td><td></td><td></td></tr>
              <tr><th>单位</th><td></td><td></td><td></td><td></td><td></td><td></td><td></td><td></td><td></td></tr>
              <tr><th>注释</th><td></td><td></td><td></td><td></td><td></td><td></td><td></td><td></td><td></td></tr>
              <tr class="fx"><th>F(x)=</th><td></td><td></td><td></td><td></td><td></td><td></td><td></td><td></td><td></td></tr>
            </tbody>
            <tbody class="data picked">
              <tr><th><b>1</b></th><td class="cur">0.25</td><td>0.86826</td><td>0.07467</td><td></td><td></td><td></td><td></td><td></td><td></td></tr>
              <tr><th>2</th><td>0.5</td><td>2.58815</td><td>0.1515</td><td></td><td></td><td></td><td></td><td></td><td></td></tr>
              <tr><th>3</th><td>0.75</td><td>5.20991</td><td>0.25998</td><td></td><td></td><td></td><td></td><td></td><td></td></tr>
              <tr><th>4</th><td>1</td><td>9.28325</td><td>0.58377</td><td></td><td></td><td></td><td></td><td></td><td></td></tr>
              <tr><th>5</th><td>2</td><td>14.72167</td><td>1.04237</td><td></td><td></td><td></td><td></td><td></td><td></td></tr>
              <tr><th>6</th><td>4</td><td>22.13101</td><td>1.63009</td><td></td><td></td><td></td><td></td><td></td><td></td></tr>
              <tr><th>7</th><td>6</td><td>31.56651</td><td>2.18514</td><td></td><td></td><td></td><td></td><td></td><td></td></tr>
              <tr><th>8</th><td>8</td><td>43.43889</td><td>2.65032</td><td></td><td></td><td></td><td></td><td></td><td></td></tr>
              <tr><th>9</th><td>10</td><td>57.95794</td><td>3.16984</td><td></td><td></td><td></td><td></td><td></td><td></td></tr>
              <tr><th>10</th><td>12</td><td>75.26232</td><td>3.73382</td><td></td><td></td><td></td><td></td><td></td><td></td></tr>
              <tr><th>11</th><td>24</td><td>95.5806</td><td>5.09494</td><td></td><td></td><td></td><td></td><td></td><td></td></tr>
              <tr><th>12</th><td>36</td><td>100</td><td>7.25231</td><td></td><td></td><td></td><td></td><td></td><td></td></tr>
            </tbody>
            <tbody class="data">
              <tr><th>13</th><td></td><td></td><td></td><td></td><td></td><td></td><td></td><td></td><td></td></tr>
              <tr><th>14</th><td></td><td></td><td></td><td></td><td></td><td></td><td></td><td></td><td></td></tr>
              <tr><th>15</th><td></td><td></td><td></td><td></td><td></td><td></td><td></td><td></td><td></td></tr>
              <tr><th>16</th><td></td><td></td><td></td><td></td><td></td><td></td><td></td><td></td><td></td></tr>
              <tr><th>17</th><td></td><td></td><td></td><td></td><td></td><td></td><td></td><td></td><td></td></tr>
              <tr><th>18</th><td></td><td></td><td></td><td></td><td></td><td></td><td></td><td></td><td></td></tr>
              <tr><th>19</th><td></td><td></td><td></td><td></td><td></td><td></td><td></td><td></td><td></td></tr>
              <tr><th>20</th><td></td><td></td><td></td><td></td><td></td><td></td><td></td><td></td><td></td></tr>
              <tr><th>21</th><td></td><td></td><td></td><td></td><td></td><td></td><td></td><td></td><td></td></tr>
              <tr><th>22</th><td></td><td></td><td></td><td></td><td></td><td></td><td></td><td></td><td></td></tr>
              <tr><th>23</th><td></td><td></td><td></td><td></td><td></td><td></td><td></td><td></td><td></td></tr>
              <tr><th>24</th><td></td><td></td><td></td><td></td><td></td><td></td><td></td><td></td><td></td></tr>
              <tr><th>25</th><td></td><td></td><td></td><td></td><td></td><td></td><td></td><td></td><td></td></tr>
              <tr><th>26</th><td></td><td></td><td></td><td></td><td></td><td></td><td></td><td></td><td></td></tr>
              <tr><th>27</th><td></td><td></td><td></td><td></td><td></td><td></td><td></td><td></td><td></td></tr>
              <tr><th>28</th><td></td><td></td><td></td><td></td><td></td><td></td><td></td><td></td><td></td></tr>
              <tr><th>29</th><td></td><td></td><td></td><td></td><td></td><td></td><td></td><td></td><td></td></tr>
              <tr><th>30</th><td></td><td></td><td></td><td></td><td></td><td></td><td></td><td></td><td></td></tr>
            </tbody>
          </table>
        </div>
        <div class="vscroll"><span class="up"></span><span class="thumb"></span><span class="down"></span></div>
      </div>
      <div class="foot">
        <div class="tabs"><span class="nav"></span><button>Sheet1</button><button>FitLinear1</button><button>FitLinearCurve1</button></div>
        <div class="hscroll"><span class="left"></span></div>
      </div>
    </section>

    <aside class="align">
      <div class="cap"><i class="tri"></i>✕</div>
      <button aria-label="左对齐"><svg><use href="#al1"/></svg></button>
      <button aria-label="右对齐"><svg><use href="#al2"/></svg></button>
      <button aria-label="顶对齐"><svg><use href="#al3"/></svg></button>
      <button aria-label="底对齐"><svg><use href="#al4"/></svg></button>
      <button aria-label="垂直居中"><svg><use href="#al5"/></svg></button>
      <button aria-label="水平居中"><svg><use href="#al6"/></svg></button>
      <button aria-label="等宽"><svg><use href="#al7"/></svg></button>
      <button aria-label="等高"><svg><use href="#al8"/></svg></button>
      <button aria-label="水平分布"><svg><use href="#al9"/></svg></button>
      <button aria-label="垂直分布"><svg><use href="#al10"/></svg></button>
      <button aria-label="置前"><svg><use href="#front"/></svg></button>
      <button aria-label="置后"><svg><use href="#back"/></svg></button>
      <button aria-label="数据前"><svg><use href="#one"/></svg></button>
      <button aria-label="数据后"><svg><use href="#oneq"/></svg></button>
      <button aria-label="组合"><svg><use href="#group"/></svg></button>
      <button aria-label="取消组合"><svg><use href="#ungroup"/></svg></button>
    </aside>
  </main>

  <footer class="tools bottom">
    <div class="toolbox tail"><button class="vmore" aria-label="更多"></button></div>
    <div class="bar">
      <i class="grip"></i>
      <button class="dd" aria-label="折线图"><svg><use href="#line"/></svg></button>
      <button class="dd" aria-label="散点图"><svg><use href="#scatter"/></svg></button>
      <button class="dd" aria-label="点线图"><svg><use href="#linesym"/></svg></button>
      <button class="dd" aria-label="柱状图"><svg><use href="#bars"/></svg></button>
      <button class="dd" aria-label="多面板"><svg><use href="#multi"/></svg></button>
      <button class="dd" aria-label="箱线图"><svg><use href="#box"/></svg></button>
      <button class="dd" aria-label="面积图"><svg><use href="#area"/></svg></button>
      <button class="dd" aria-label="极坐标"><svg><use href="#polar"/></svg></button>
      <button class="dd" aria-label="K线图"><svg><use href="#candle"/></svg></button>
      <button aria-label="模板库"><svg><use href="#tmpl"/></svg></button>
      <button class="more" aria-label="更多"></button>
    </div>
    <div class="bar">
      <i class="grip"></i>
      <button class="dd" aria-label="3D 柱状图"><svg><use href="#bars3d"/></svg></button>
      <i class="sep"></i>
      <button class="dd" aria-label="3D 曲面"><svg><use href="#surf"/></svg></button>
      <button class="dd" aria-label="3D 散点"><svg><use href="#sc3d"/></svg></button>
      <button class="dd" aria-label="等高线"><svg><use href="#contour"/></svg></button>
      <button class="dd" aria-label="剖面图"><svg><use href="#contour2"/></svg></button>
      <button aria-label="图像"><svg><use href="#gray"/></svg></button>
      <button class="more" aria-label="更多"></button>
    </div>
    <div class="bar">
      <i class="grip"></i>
      <button aria-label="屏蔽范围"><svg><use href="#mask"/></svg></button>
      <button aria-label="取消屏蔽"><svg><use href="#maskg"/></svg></button>
      <i class="sep tight"></i>
      <button aria-label="屏蔽颜色"><svg><use href="#shield"/></svg></button>
      <button aria-label="隐藏屏蔽"><svg><use href="#ptsg"/></svg></button>
      <button aria-label="交换屏蔽"><svg><use href="#ptsg"/></svg></button>
      <i class="sep tight"></i>
      <button aria-label="启用屏蔽"><svg><use href="#pts"/></svg></button>
      <button class="more" aria-label="更多"></button>
    </div>
    <div class="bar">
      <i class="grip"></i>
      <button aria-label="逆时针"><svg><use href="#rot1"/></svg></button>
      <button aria-label="顺时针"><svg><use href="#rot2"/></svg></button>
      <button aria-label="左倾"><svg><use href="#tilt1"/></svg></button>
      <button aria-label="右倾"><svg><use href="#tilt2"/></svg></button>
      <button aria-label="下倾"><svg><use href="#trapu"/></svg></button>
      <button aria-label="上倾"><svg><use href="#trapd"/></svg></button>
      <button aria-label="透视"><svg><use href="#persp"/></svg></button>
      <button aria-label="缩放"><svg><use href="#stack"/></svg></button>
      <button aria-label="适应"><svg><use href="#fit"/></svg></button>
      <button aria-label="重置旋转"><svg><use href="#cubeg"/></svg></button>
      <button aria-label="重置"><svg><use href="#cubeg"/></svg></button>
      <div class="combo size off"><select aria-label="角度"><option>10</option></select></div>
      <button class="more" aria-label="更多"></button>
    </div>
  </footer>

  <svg class="ball" viewBox="0 0 24 24"><circle cx="12" cy="12" r="11" fill="#e79a93" stroke="#c96a66"/><path d="M4 15q8-9 16-4M7 11l10 8" fill="none" stroke="#fff" stroke-width="1.500"/></svg>

  <div class="note">
    <div class="notebtns"><button>?</button><button>✕</button></div>
    <p>您可以按下 Shift 按键在菜单单击来打开加载了主题的对话框</p>
    <label><input type="checkbox">以后不再显示此信息</label>
  </div>

  <div class="menu m1" role="menu">
    <button class="sub">数学<small>(<u>M</u>)</small></button>
    <button class="sub">数据操作<small>(<u>D</u>)</small></button>
    <button class="sub hot">拟合<small>(<u>F</u>)</small></button>
    <button class="sub">信号处理<small>(<u>P</u>)</small></button>
    <button class="sub">峰值及基线<small>(<u>B</u>)</small></button>
    <hr>
    <button><u>1</u> 线性拟合<small>(L):</small> &lt;上次使用的&gt;...</button>
    <button><u>2</u> 线性拟合<small>(L):</small> &lt;默认&gt;...</button>
    <button><u>3</u> 非线性曲线拟合<small>(N):</small> &lt;上次使用的&gt;...</button>
    <button><u>4</u> 非线性曲线拟合<small>(N):</small> &lt;默认&gt;...</button>
    <button><u>5</u> 归一化列<small>(N):</small> &lt;上次使用的&gt;...</button>
    <button><u>6</u> 归一化列<small>(N):</small> &lt;默认&gt;...</button>
    <button><u>7</u> 归一化列<small>(N):</small> &lt;上次使用的&gt;</button>
  </div>

  <div class="menu m2" role="menu">
    <button class="sub">线性拟合<small>(<u>L</u>)</small></button>
    <button>带X误差的线性拟合<small>(<u>X</u>)...</small></button>
    <button>多项式拟合<small>(<u>P</u>)...</small></button>
    <button>多元线性回归<small>(<u>R</u>)...</small></button>
    <hr>
    <button class="sub hot">非线性曲线拟合<small>(<u>N</u>)</small></button>
    <button>非线性隐函数曲线拟合<small>(<u>I</u>)...</small></button>
    <button>非线性曲面拟合<small>(<u>S</u>)...</small></button>
    <hr>
    <button>拟合曲线模拟<small>(<u>C</u>)...</small></button>
    <button>拟合曲面模拟<small>(<u>U</u>)...</small></button>
    <hr>
    <button>指数拟合<small>(<u>E</u>)...</small></button>
    <button>单峰拟合<small>(<u>F</u>)...</small></button>
    <button>S型函数拟合<small>(<u>G</u>)...</small></button>
    <hr>
    <button>拟合数据比较<small>(<u>D</u>)...</small></button>
    <button>拟合模型比较<small>(<u>M</u>)...</small></button>
    <button>最优模型<small>(<u>A</u>)...</small></button>
  </div>

  <div class="menu m3" role="menu">
    <button><u>1</u> &lt;上次使用的&gt;</button>
    <hr>
    <button class="hot">打开对话框<small>(<u>O</u>)...</small><kbd>Ctrl+Y</kbd></button>
  </div>

  <svg class="arrows" viewBox="0 0 1080 632" aria-hidden="true">
    <path d="M221 313l17 11-5 3 33 60-39-57-6 3z"/>
    <path d="M421 91l-5 19-5-3-56 43 49-50-3-6z"/>
    <path d="M857 198l12 18-5 1 36 157-45-155-4 1z"/>
    <path d="M1019 632l18-4-2 4z" class="orange"/>
  </svg>
  <p class="mark k1">1.重新选中数据</p>
  <p class="mark k2">2.拟合</p>
  <p class="mark k3">3.非线性拟合</p>

  <svg class="wechat" viewBox="0 0 48 42" aria-hidden="true"><g fill="#fff" stroke="#bbb"><path d="M17 1C8 1 1 7 1 15c0 5 3 9 7 11l-2 6 6-4 5 1c9 0 16-6 16-14S26 1 17 1z"/><path d="M33 14c-8 0-14 5-14 12s6 12 14 12l4-1 5 3-1-4c4-2 6-6 6-10 0-7-6-12-14-12z"/></g><g fill="#fff" stroke="#777"><circle cx="12" cy="10" r="2"/><circle cx="24" cy="10" r="2"/><circle cx="29" cy="21" r="1.500"/><circle cx="39" cy="21" r="1.500"/></g></svg>
  <p class="wm w1">Paper绘图</p>
  <p class="wm w2">头条 @Paper绘图</p>
</div>
</body>
</html>
```
FILE: styles.css
```css
* { box-sizing: border-box; }
body { margin: 0; font-family: "Noto Sans", "Noto Sans CJK SC", sans-serif; color: #222; }
button { border: 0; margin: 0; padding: 0; background: none; font: inherit; color: inherit; }
p, h1 { margin: 0; font-weight: normal; }
small { font-size: 9px; }
.sprite { display: block; position: absolute; width: 0; height: 0; }

.app { position: relative; display: flex; flex-direction: column; height: 100vh; overflow: hidden; background: #e8eafb; }

.title { display: flex; align-items: center; gap: 5px; height: 21px; padding-left: 1px; background: #fff; }
.title h1 { font-size: 11px; line-height: 20px; color: #333; }
.logo { width: 15px; height: 15px; }

.menubar { display: flex; align-items: center; height: 20px; background: #eff1fc; font-size: 12px; white-space: nowrap; }
.menubar button { height: 18px; padding: 0 6px 0 5px; line-height: 16px; border: 1px solid transparent; }
.menubar .open { background: linear-gradient(#e3f1fb, #a9d3f2); border-color: #4a93c8; }
.bookicon { width: 15px; height: 15px; margin: 0 2px 0 1px; }

.grip { flex: none; width: 4px; height: 14px; margin: 0 2px; background: radial-gradient(circle, #9a9db2 1px, transparent 1px) 0 0 / 4px 4px; }
.tools { display: flex; height: 24px; background: #e8eafb; }
.tools + .tools { height: 23px; }
.bar { display: flex; flex: none; align-items: center; background: linear-gradient(#fbfbff, #e3e4f2 45%, #b4b7ce); border-bottom: 1px solid #e8eafb; }
.fill { flex: 1; overflow: hidden; }
.fonts { padding-left: 3px; }
.bar.last { margin-right: -4px; }
.bar button { display: flex; flex: none; align-items: center; justify-content: center; width: 20px; height: 20px; }
.bar svg { width: 16px; height: 16px; flex: none; }
.bar .dd { width: 28px; }
.dd::after { content: ""; border: 3px solid transparent; border-top-color: #111; border-bottom: 0; margin-left: 5px; }
.sep { flex: none; width: 1px; height: 16px; margin: 0 3px; background: #b5b7ca; box-shadow: 1px 0 #fff; }
.tight { margin: 0 2px; }
.bar .on { background: #cfe7f8; border: 1px solid #4ea0dc; }
.bar .more { align-self: stretch; height: auto; width: 10px; align-items: flex-end; padding-bottom: 3px; background: linear-gradient(#c9cbe0, #a9acc8); border-radius: 0 0 4px 0; }
.more::after { content: ""; width: 6px; height: 5px; background: #111; clip-path: polygon(0 0, 100% 0, 100% 20%, 0 20%, 0 40%, 100% 40%, 50% 100%, 0 40%); }

.combo { display: flex; flex: none; align-items: center; height: 17px; margin-right: 5px; background: #fff; }
.combo select { flex: 1; min-width: 0; height: 17px; padding: 0 3px; border: 0; background: transparent; appearance: none; font: 12px/16px "Noto Sans CJK SC", sans-serif; color: #333; opacity: 1; }
.combo::after { content: ""; border: 3px solid transparent; border-top: 4px solid #222; border-bottom: 0; margin-right: 4px; }
.combo.font { width: 111px; padding-left: 4px; }
.combo.size { width: 51px; }
.combo.size select, .combo.width select { font-size: 10px; }
.combo.width { width: 86px; }
.combo.width select { padding-left: 34px; }
.combo.style { width: 38px; border: 1px solid #bbb; }
.off { border: 1px solid #bbb; background: #f4f4f8; }
.off.combo select { color: #777; }
.off.combo::after { border-top-color: #777; }
.bar .ltr, .ltr { font: 15px "Liberation Serif", serif; color: #111; }
.bar .dim { font-size: 13px; color: #777; }
.bar .mid { font-size: 15px; }
.bar .big { font-size: 19px; }
sup, sub { font-size: 7px; line-height: 0; }
sup { align-self: flex-start; padding-top: 6px; }
sub { align-self: flex-end; padding-bottom: 5px; }

.work { flex: 1; display: flex; min-height: 0; padding-top: 2px; }
.dock { width: 18px; display: flex; flex-direction: column; gap: 2px; font-size: 11px; line-height: 14px; }
.dock button { width: 17px; padding-top: 5px; text-align: left; writing-mode: vertical-rl; text-orientation: sideways; background: #f1f1f1; border: solid #d8d8e2; border-width: 0 1px 1px 0; }
.dock .d1 { height: 102px; }
.dock .d2 { height: 80px; padding-top: 15px; }
.dock .d3 { height: 98px; padding-top: 15px; }

.side { display: flex; flex-direction: column; width: 33px; padding-left: 2px; }
.toolbox { display: flex; flex-direction: column; background: linear-gradient(90deg, #fafaff, #e0e2f1 55%, #b5b8cf); border-radius: 0 0 4px 4px; }
.wide { width: 29px; height: 393px; }
.narrow { flex: 1; width: 21px; margin-top: 1px; border-radius: 0; }
.hgrip { height: 6px; margin: 0 4px; background: radial-gradient(circle, #8d90a6 1px, transparent 1px) 0 1px / 4px 4px repeat-x; }
.toolbox button { display: flex; align-items: center; width: 20px; padding-left: 2px; height: 20px; flex: 0 1 20px; }
.toolbox svg { width: 16px; height: 16px; flex: none; }
.toolbox .dd { width: 28px; }
.toolbox .dd::after { margin-left: 3px; }
.toolbox .on { padding-left: 1px; background: #cfe7f8; border: 1px solid #4ea0dc; }
.toolbox .tee { font-size: 17px; padding-left: 4px; }
.toolbox .vmore { flex: 0 0 11px; width: auto; align-self: flex-end; padding-right: 3px; }
.vmore::after { content: ""; width: 6px; height: 6px; background: #111; clip-path: polygon(0 0, 17% 0, 17% 100%, 0 100%, 0 0, 40% 0, 100% 50%, 40% 100%, 40% 0); }
.tail { width: 21px; margin: 0 11px 0 20px; justify-content: flex-end; }

.book { flex: 1; min-width: 0; display: flex; flex-direction: column; border: solid #7c7e8c; border-width: 0 0 0 1px; }
.view { flex: 1; min-height: 0; display: flex; }
.canvas { flex: 1; min-width: 0; overflow: hidden; background: #dfdee4; }
.sheet { table-layout: fixed; width: 617px; border-spacing: 0; font-family: "Liberation Mono", "Noto Sans CJK SC", monospace; font-size: 9px; line-height: 10px; border-top: 1px solid #444; }
.sheet th, .sheet td { padding: 0; height: 14px; font-weight: normal; white-space: nowrap; overflow: hidden; }
.data tr:nth-child(3n) > * { height: 15px; }
.sheet thead th { height: 21px; width: 60px; background: #e0dfe4; border: solid #333; border-width: 0 1px 1px 0; font: 10px/16px "Liberation Mono", monospace; }
.sheet thead .rh { width: 77px; }
.sheet thead .sel, .sheet .picked th { background: #b8bdd6; }
.sheet thead .b { font-weight: bold; }
.sheet tbody th { padding-right: 4px; text-align: right; background: #e0dfe4; border: solid #222; border-width: 0 1px 1px 0; font-family: "DejaVu Sans Mono", "Noto Sans CJK SC", monospace; font-size: 9px; }
.sheet .meta th { font-family: "Liberation Mono", "Noto Sans CJK SC", monospace; font-size: 11px; }
.sheet td { border: solid #bdbdbd; border-width: 0 1px 1px 0; background: #fff; }
.sheet .meta td { background: #fafac8; text-align: center; }
.sheet .meta .fx td { background: #f5f3ae; }
.sheet .meta .fx th { font-size: 9px; }
.sheet .data td { text-align: right; padding-right: 4px; }
.sheet .picked td:nth-child(2), .sheet .picked td:nth-child(3) { background: #000; color: #eee; border-color: #444; }
.sheet .picked td:nth-child(3) { border-right: 2px solid #000; }
.sheet .picked td.cur { background: #fff; color: #111; border: 2px solid #000; border-bottom-width: 0; padding-right: 2px; }
.sheet .picked tr:last-child td:nth-child(2), .sheet .picked tr:last-child td:nth-child(3) { border-bottom: 2px solid #000; }

.vscroll { width: 15px; display: flex; flex-direction: column; align-items: center; background: #f0f0f0; }
.thumb { flex: 1; width: 13px; margin-bottom: 44px; background: #cdcdcd; }
.up, .down, .left { width: 6px; height: 6px; border: solid #555; border-width: 2px 0 0 2px; transform: rotate(45deg); }
.up { margin: 7px 0 3px; }
.down { transform: rotate(225deg); margin-bottom: 8px; }
.foot { display: flex; height: 17px; }
.tabs { display: flex; flex: 0 1 688px; margin-right: 10px; background: #c8c8c8; border: solid #444; border-width: 1px 1px 1px 0; overflow: hidden; font: 12px/14px "Liberation Mono", monospace; }
.nav { width: 33px; background: #f0f0f0; }
.tabs button { display: flex; padding-left: 8px; background: linear-gradient(90deg, #f0f0f0 calc(100% - 4px), transparent 0); }
.tabs button::after { content: ""; width: 15px; height: 15px; background: linear-gradient(110deg, transparent 8px, #222 8px, #222 10px, transparent 10px); }
.hscroll { flex: 1; display: flex; align-items: center; padding-left: 7px; background: linear-gradient(90deg, #f0f0f0 16px, #cdcdcd 16px); border-left: 1px solid #444; }
.left { transform: rotate(-45deg); }

.align { width: 22px; margin-left: 3px; align-self: flex-start; display: flex; flex-direction: column; background: linear-gradient(90deg, #fafaff, #d9dbec 50%, #aeb1cb); border: solid #777a8c; border-width: 0 0 2px 1px; padding-bottom: 1px; }
.cap { display: flex; align-items: center; justify-content: center; gap: 1px; height: 21px; font-size: 10px; background: #a5a5aa; color: #111; }
.tri { border: 4px solid transparent; border-top-color: #111; border-bottom: 0; }
.align button { display: flex; align-items: center; justify-content: center; height: 24px; }
.align svg { width: 16px; height: 16px; }

.bottom { height: 24px; }

.ball { position: absolute; left: 2px; bottom: -16px; width: 24px; height: 24px; }

.note { position: absolute; left: 51px; top: 537px; width: 263px; padding: 0 0 4px 9px; background: rgba(255, 255, 112, .8); color: #444; }
.notebtns { display: flex; gap: 3px; justify-content: flex-end; height: 19px; }
.notebtns button { width: 9px; height: 9px; font-size: 8px; line-height: 8px; background: #e4e4d8; border: 1px solid #999; color: #222; }
.note p { padding-right: 8px; font: 9px/12px "Liberation Mono", "Noto Sans CJK SC", monospace; }
.note label { display: flex; align-items: center; gap: 3px; margin-top: 5px; font-size: 11px; line-height: 18px; color: #333; }
.note input { appearance: none; width: 12px; height: 12px; margin: 0; background: #fff; border: 1px solid #444; }

.menu { position: absolute; display: flex; flex-direction: column; padding: 1px; font-size: 12px; border: 1px solid #8a8a8a; box-shadow: 2px 2px 2px rgba(0, 0, 0, .4); background: linear-gradient(90deg, #efefef 22px, #dcdcdc 22px, #dcdcdc 23px, #fcfcfc 23px); }
.menu button { flex: 1; display: block; position: relative; padding: 0 5px 0 24px; text-align: left; white-space: nowrap; line-height: 16px; border: 1px solid transparent; border-radius: 3px; color: #222; }
.menu hr { flex: none; height: 1px; width: auto; align-self: stretch; margin: 3px 0 3px 30px; border: 0; background: #c4c4c4; }
.menu .hot { background: linear-gradient(#f0f8fe, #d6eaf8 50%, #b5daf2); border-color: #8fbfe2; }
.sub::after { content: ""; position: absolute; right: 3px; top: 4px; border: 5px solid transparent; border-left-color: #111; border-right: 0; }
.menu kbd { position: absolute; right: 6px; font: 9px/17px "Noto Sans", sans-serif; }
.m1 { left: 414px; top: 39px; width: 246px; height: 247px; }
.m2 { left: 659px; top: 79px; width: 190px; height: 327px; }
.m3 { left: 849px; top: 165px; width: 173px; height: 49px; }
.m1 .hot, .m2 .hot { margin: 0 1px; padding-left: 23px; }

.arrows { position: absolute; left: 0; top: 0; width: 1080px; height: 632px; fill: #f83b38; pointer-events: none; }
.arrows .orange { fill: #f26a3c; }
.mark { position: absolute; font: 24px/28px "Noto Sans CJK SC", sans-serif; color: #f04440; white-space: nowrap; }
.k1 { left: 296px; top: 391px; }
.k2 { left: 327px; top: 161px; }
.k3 { left: 867px; top: 386px; }

.wechat { position: absolute; left: 862px; top: 559px; width: 48px; height: 42px; }
.wm { position: absolute; white-space: nowrap; font: 26px/30px "Noto Sans", "Noto Sans CJK SC", sans-serif; }
.w1 { left: 917px; top: 564px; color: #f4f4f4; text-shadow: 1px 1px #777, -1px -1px #999; }
.w2 { left: 834px; top: 585px; font-size: 27px; color: #000; text-shadow: -1px -1px #fff, 1px 0 #fff; }
```
